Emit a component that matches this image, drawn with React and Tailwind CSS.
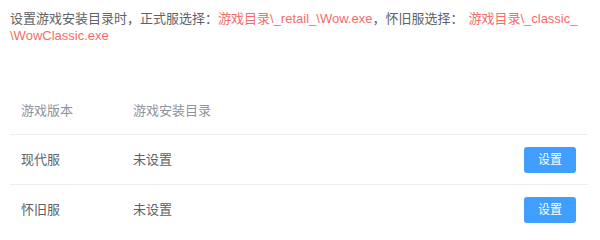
const rows = [
  { id: 'retail', name: '现代服', path: '未设置' },
  { id: 'classic', name: '怀旧服', path: '未设置' },
]

function Row({ name, path }) {
  return (
    <div className="flex h-[50px] items-center border-t border-[#ebeef5] text-[#606266]">
      <div className="w-[112px] pl-[11px]">{name}</div>
      <div className="flex-1 pl-[11px]">{path}</div>
      <div className="pr-[12px]">
        <button
          type="button"
          className="h-[26px] w-[52px] rounded-[3px] bg-[#409eff] text-[12px] text-white"
        >
          设置
        </button>
      </div>
    </div>
  )
}

export default function App() {
  return (
    <div
      className="h-[235px] w-[600px] overflow-hidden bg-white text-[13px]"
      style={{ fontFamily: '"Liberation Sans", "Noto Sans CJK SC", sans-serif' }}
    >
      <p className="whitespace-nowrap pl-[10px] pt-[10px] leading-[17px] text-[#606266]">
        设置游戏安装目录时，正式服选择：
        <span className="text-[#f56c6c]">游戏目录\_retail_\Wow.exe</span>
        <span className="pr-[5px]">，怀旧服选择：</span>
        <span className="text-[#f56c6c]">游戏目录\_classic_</span>
        <br />
        <span className="text-[#f56c6c]">\WowClassic.exe</span>
      </p>

      <div className="ml-[10px] mr-[12px] mt-[44px]">
        <div className="flex h-[46px] items-center text-[#909399]">
          <div className="w-[112px] pl-[11px]">游戏版本</div>
          <div className="flex-1 pl-[11px]">游戏安装目录</div>
        </div>
        {rows.map((r) => (
          <Row key={r.id} name={r.name} path={r.path} />
        ))}
      </div>
    </div>
  )
}
